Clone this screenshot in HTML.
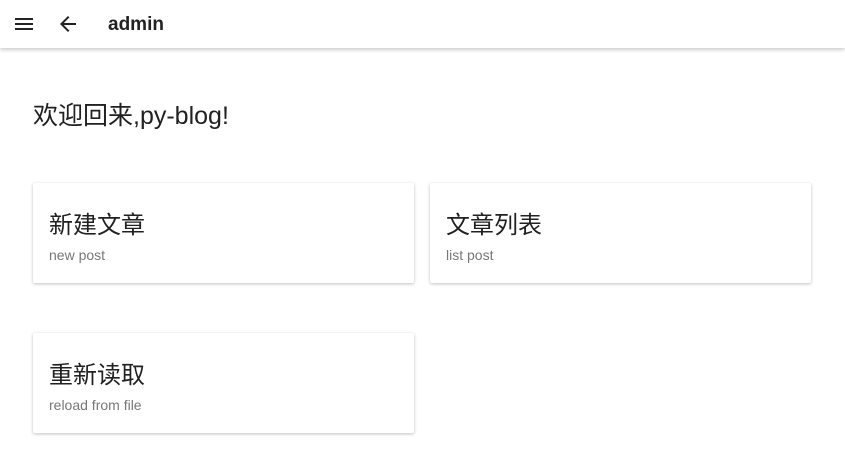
<!DOCTYPE html>
<html><head><meta charset="utf-8"><style>
body{margin:0;width:845px;height:471px;background:#fff;font-family:"Liberation Sans","Noto Sans CJK SC",sans-serif;overflow:hidden;position:relative;color:#212121}
.bar{position:absolute;left:0;top:0;width:845px;height:48px;background:#fff;box-shadow:0 2px 4px rgba(0,0,0,.2)}
.title{position:absolute;left:108px;top:14px;font-size:19px;font-weight:bold;color:#222}
h1{position:absolute;left:33px;top:100px;margin:0;font-size:25px;font-weight:normal;line-height:32px}
.card{position:absolute;width:381px;height:100px;background:#fff;border-radius:2px;box-shadow:0 1px 3px rgba(0,0,0,.25)}
.card .h{position:absolute;left:16px;top:28px;font-size:24px;line-height:30px}
.card .s{position:absolute;left:16px;top:64px;font-size:14px;color:#777}
</style></head><body>
<div class="bar">
<svg style="position:absolute;left:12px;top:12px" width="24" height="24" viewBox="0 0 24 24"><path d="M3 6h18v2H3zm0 5h18v2H3zm0 5h18v2H3z" fill="#222"/></svg>
<svg style="position:absolute;left:56px;top:12px" width="24" height="24" viewBox="0 0 24 24"><path d="M20 11H7.83l5.59-5.59L12 4l-8 8 8 8 1.41-1.41L7.83 13H20v-2z" fill="#222"/></svg>
<div class="title">admin</div>
</div>
<h1>欢迎回来,py-blog!</h1>
<div class="card" style="left:33px;top:183px"><div class="h">新建文章</div><div class="s">new post</div></div>
<div class="card" style="left:430px;top:183px"><div class="h">文章列表</div><div class="s">list post</div></div>
<div class="card" style="left:33px;top:333px"><div class="h">重新读取</div><div class="s">reload from file</div></div>
</body></html>
